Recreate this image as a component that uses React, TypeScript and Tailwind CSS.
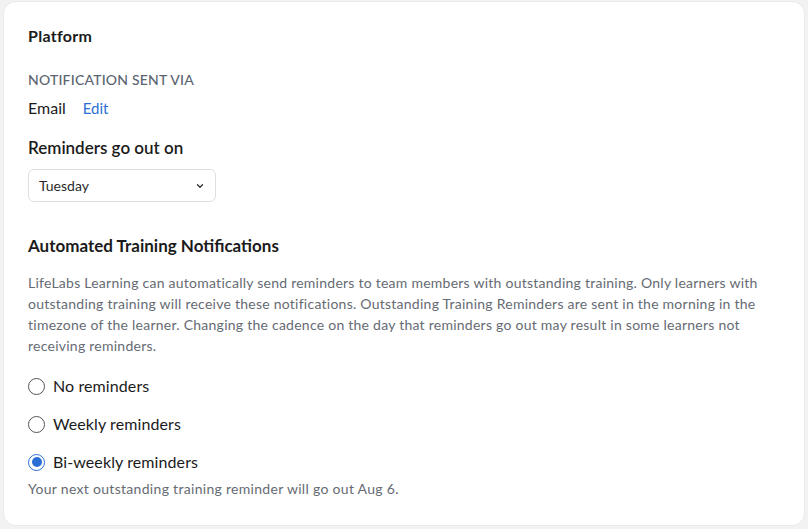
import { useState } from "react";

const options = [
  { id: "none", label: "No reminders" },
  { id: "weekly", label: "Weekly reminders" },
  { id: "biweekly", label: "Bi-weekly reminders" },
];

export default function App() {
  const [selected, setSelected] = useState("biweekly");

  return (
    <div
      className="min-h-[529px] w-full bg-[#f2f2f2] px-[4px] pt-[2px] pb-[5px]"
      style={{ fontFamily: "Lato, 'Noto Sans', sans-serif" }}
    >
      <section className="rounded-[12px] bg-white px-[24px] pt-[23px] pb-[26px] shadow-[0_0_0_1px_rgba(0,0,0,0.03)]">
        <h2 className="text-[16px] font-bold leading-[22px] tracking-[0.3px] text-[#1b1b1b]">Platform</h2>

        <p className="mt-[23px] text-[14px] font-medium leading-[20px] tracking-[0.2px] text-[#5b6470]">
          NOTIFICATION SENT VIA
        </p>
        <div className="mt-[8px] flex items-center gap-[17px]">
          <span className="text-[16px] leading-[20px] text-[#1b1b1b]">Email</span>
          <button className="text-[15px] leading-[20px] text-[#2b6fd6]">Edit</button>
        </div>

        <h3 className="mt-[18px] text-[17px] font-semibold leading-[24px] text-[#1b1b1b]">
          Reminders go out on
        </h3>
        <div className="mt-[9px] flex h-[33px] w-[188px] items-center justify-between rounded-[6px] border border-[#dcdfe3] pl-[10px] pr-[10px]">
          <span className="text-[14px] text-[#2a2a2a]">Tuesday</span>
          <svg viewBox="0 0 12 12" className="h-[10px] w-[10px]" fill="none" stroke="#333" strokeWidth="1.6" strokeLinecap="round" strokeLinejoin="round">
            <path d="M3 4.5 6 7.5 9 4.5" />
          </svg>
        </div>

        <h3 className="mt-[32px] text-[17px] font-bold leading-[24px] text-[#1b1b1b]">
          Automated Training Notifications
        </h3>
        <p className="mt-[14px] text-[14px] leading-[21px] tracking-[0.25px] text-[#666b73]">
          LifeLabs Learning can automatically send reminders to team members with outstanding training. Only learners with
          outstanding training will receive these notifications. Outstanding Training Reminders are sent in the morning in the
          timezone of the learner. Changing the cadence on the day that reminders go out may result in some learners not
          receiving reminders.
        </p>

        <div className="mt-[18px] flex flex-col gap-[14px]">
          {options.map((o) => {
            const checked = selected === o.id;
            return (
              <label key={o.id} className="flex h-[24px] cursor-pointer items-center gap-[8px]" onClick={() => setSelected(o.id)}>
                <span
                  className={`flex h-[17px] w-[17px] items-center justify-center rounded-full border ${
                    checked ? "border-[#2b6fd6]" : "border-[#555]"
                  }`}
                >
                  {checked && <span className="h-[10px] w-[10px] rounded-full bg-[#2b6fd6]" />}
                </span>
                <span className="text-[16px] tracking-[0.1px] text-[#1b1b1b]">{o.label}</span>
              </label>
            );
          })}
        </div>
        <p className="mt-[5px] text-[14px] leading-[20px] tracking-[0.3px] text-[#666b73]">
          Your next outstanding training reminder will go out Aug 6.
        </p>
      </section>
    </div>
  );
}
